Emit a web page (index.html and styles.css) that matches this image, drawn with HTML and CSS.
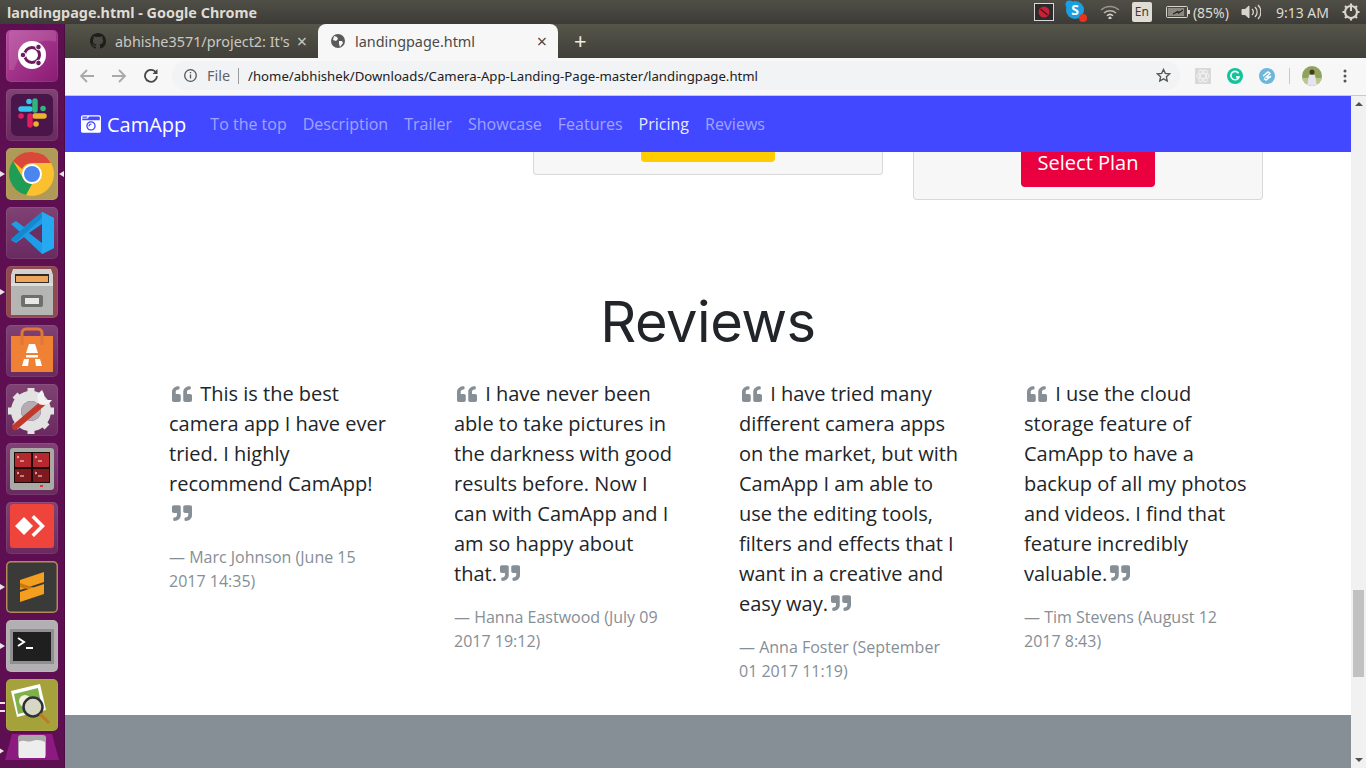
FILE: index.html
```html
<!DOCTYPE html>
<html lang="en">
<head>
  <meta charset="UTF-8" />
  <title>landingpage.html - Google Chrome</title>
  <link rel="stylesheet" href="styles.css">
</head>
<body>

  <svg class="defs" width="0" height="0">
    <symbol id="quote-left" viewBox="0 0 512 512" preserveAspectRatio="none"><path d="M464 256h-80v-64c0-35.300 28.700-64 64-64h8c13.300 0 24-10.700 24-24V56c0-13.300-10.700-24-24-24h-8c-88.400 0-160 71.600-160 160v240c0 26.500 21.500 48 48 48h128c26.500 0 48-21.500 48-48V304c0-26.500-21.500-48-48-48zm-288 0H96v-64c0-35.300 28.700-64 64-64h8c13.300 0 24-10.700 24-24V56c0-13.300-10.700-24-24-24h-8C71.600 32 0 103.600 0 192v240c0 26.500 21.500 48 48 48h128c26.500 0 48-21.500 48-48V304c0-26.500-21.500-48-48-48z"/></symbol>
    <symbol id="quote-right" viewBox="0 0 512 512" preserveAspectRatio="none"><path d="M464 32H336c-26.500 0-48 21.500-48 48v128c0 26.500 21.500 48 48 48h80v64c0 35.300-28.700 64-64 64h-8c-13.300 0-24 10.700-24 24v48c0 13.300 10.700 24 24 24h8c88.400 0 160-71.600 160-160V80c0-26.500-21.500-48-48-48zm-288 0H48C21.500 32 0 53.500 0 80v128c0 26.500 21.500 48 48 48h80v64c0 35.300-28.700 64-64 64h-8c-13.300 0-24 10.700-24 24v48c0 13.300 10.700 24 24 24h8c88.400 0 160-71.600 160-160V80c0-26.500-21.500-48-48-48z"/></symbol>
  </svg>

  <div class="topbar">
    <span class="window-title">landingpage.html - Google Chrome</span>
    <div class="tray">
      <svg class="tray-stop" width="20" height="18" viewBox="0 0 20 18"><rect x=".5" y=".5" width="19" height="17" fill="#2b2b2b" stroke="#d8d8d8"/><circle cx="10" cy="9" r="5.500" fill="#c8213a"/><path d="M6.500 6l7 6" stroke="#5a1018" stroke-width="1.500"/></svg>
      <svg class="tray-skype" width="23" height="24" viewBox="0 0 23 24"><circle cx="10" cy="10" r="9" fill="#1a9fe0"/><circle cx="4.500" cy="4.500" r="4" fill="#1a9fe0"/><text x="10" y="15" text-anchor="middle" class="skype-s">S</text><circle cx="18" cy="18" r="4" fill="#e8321f"/></svg>
      <svg class="tray-wifi" width="20" height="14" viewBox="0 0 20 14" fill="none" stroke="#d8d6cc" stroke-width="1.500"><path d="M1 5a13 13 0 0 1 18 0" opacity=".55"/><path d="M4 8a9 9 0 0 1 12 0" opacity=".8"/><path d="M7 10.700a4.500 4.500 0 0 1 6 0"/><circle cx="10" cy="13" r=".8" fill="#d8d6cc"/></svg>
      <span class="tray-lang">En</span>
      <svg class="tray-battery" width="24" height="12" viewBox="0 0 24 12"><rect x=".5" y=".5" width="21" height="11" rx="1" fill="#4a4940" stroke="#d8d6cc"/><rect x="2" y="2" width="16" height="8" fill="#8b8a80"/><rect x="22" y="4" width="2" height="4" fill="#d8d6cc"/><path d="M7 8l5-2 .5 1.500L17 4l-4.500 2.500L12 5z" fill="#2b2a25" stroke="#2b2a25"/></svg>
      <span class="tray-text tray-percent">(85%)</span>
      <svg class="tray-volume" width="20" height="16" viewBox="0 0 20 16" fill="none" stroke="#d8d6cc"><path d="M1 5.500h3L8 2v12l-4-3.500H1z" fill="#d8d6cc"/><path d="M11 5a4 4 0 0 1 0 6" stroke-width="1.300"/><path d="M14 3a7 7 0 0 1 0 10" stroke-width="1.300"/><path d="M17 1a10 10 0 0 1 0 14" stroke-width="1.300"/></svg>
      <span class="tray-text tray-clock">9:13 AM</span>
      <svg class="tray-gear" width="18" height="18" viewBox="0 0 18 18" fill="none" stroke="#d8d6cc"><circle cx="9" cy="9" r="6" stroke-width="2.200"/><path d="M9 1v7" stroke-width="2"/><path d="M9 .5v2.500M9 15v2.500M.5 9H3M15 9h2.500M3 3l1.800 1.800M13.200 13.200L15 15M3 15l1.800-1.800M13.200 4.800L15 3" stroke-width="2.200"/></svg>
    </div>
  </div>

  <div class="desktop">
    <div class="launcher">
      <div class="tile tile-ubuntu">
        <svg width="52" height="52" viewBox="0 0 52 52"><path d="M8 40C16 14 36 8 50 12v-8a3 3 0 0 0-3-3H6a3 3 0 0 0-3 3v36z" fill="#fff" opacity=".12"/><circle cx="26" cy="25" r="14" fill="#fff"/><circle cx="26" cy="25" r="7.500" fill="none" stroke="#6e1a5e" stroke-width="3"/><circle cx="32.500" cy="17" r="2.800" fill="#6e1a5e" stroke="#fff"/><circle cx="17" cy="25" r="2.800" fill="#6e1a5e" stroke="#fff"/><circle cx="32.500" cy="33" r="2.800" fill="#6e1a5e" stroke="#fff"/></svg>
      </div>
      <div class="tile tile-slack">
        <svg width="52" height="52" viewBox="0 0 52 52"><rect x="5" y="5" width="42" height="42" rx="6" fill="#4a154b"/><g stroke-width="5.500" stroke-linecap="round" fill="none"><path d="M15 20h9" stroke="#36c5f0"/><path d="M29 12v9" stroke="#2eb67d"/><path d="M29 27h9" stroke="#ecb22e"/><path d="M24 27v9" stroke="#e01e5a"/><path d="M37 19.500h.1" stroke="#2eb67d"/><path d="M30 35h.1" stroke="#ecb22e"/><path d="M15 27h.1" stroke="#e01e5a"/><path d="M23 12.500h.1" stroke="#36c5f0"/></g></svg>
      </div>
      <div class="tile tile-chrome pip-both">
        <svg width="52" height="52" viewBox="0 0 52 52"><circle cx="26" cy="26" r="22" fill="#fbc02d"/><path d="M26 4a22 22 0 0 1 19 11H26a11 11 0 0 0-10 6L7 13a22 22 0 0 1 19-9z" fill="#d9483b"/><path d="M7 13l10 17a10 10 0 0 0 9 6l-6 11A22 22 0 0 1 7 13z" fill="#1f9d55"/><circle cx="26" cy="26" r="10" fill="#fff"/><circle cx="26" cy="26" r="8" fill="#4a85f0"/></svg>
      </div>
      <div class="tile tile-plain">
        <svg width="52" height="52" viewBox="0 0 52 52"><path d="M36 5l12 6v30l-12 6-18-17-8 6-5-3 9-8-9-8 5-3 8 6z" fill="#1f9ce8"/><path d="M36 5v42l12-6V11z" fill="#27a9f2"/><path d="M36 17L23 26l13 10z" fill="#6a2f62"/><path d="M5 32l5 3 26-24v-6z" fill="#1688cf"/></svg>
      </div>
      <div class="tile tile-files pip-left">
        <svg width="52" height="52" viewBox="0 0 52 52"><path d="M7 3h38l2 6v40H5V9z" fill="#d2d2d0"/><rect x="9" y="8" width="34" height="10" fill="#2e2b28"/><rect x="10" y="10" width="32" height="6" fill="#eda65a"/><rect x="5" y="17" width="42" height="32" fill="#b5b5b3"/><rect x="5" y="17" width="42" height="3" fill="#dcdcda"/><rect x="15" y="29" width="22" height="12" rx="2" fill="#6e6e6c"/><rect x="19" y="32" width="14" height="6" fill="#e8e8e6"/></svg>
      </div>
      <div class="tile tile-plain">
        <svg width="52" height="52" viewBox="0 0 52 52"><path d="M5 11h42v36H5z" fill="#ef8135"/><path d="M16 20V8a4 4 0 0 1 4-4h12a4 4 0 0 1 4 4v12" fill="none" stroke="#e0773a" stroke-width="3"/><path d="M23 19h6l3 9h-12zM20 30h12v2.500H20zM18 34h5l-1 7h-6zM29 34h5l2 7h-6z" fill="#fff"/></svg>
      </div>
      <div class="tile tile-plain">
        <svg width="52" height="52" viewBox="0 0 52 52"><circle cx="25" cy="27" r="15" fill="none" stroke="#e2e2e2" stroke-width="10"/><circle cx="25" cy="27" r="10" fill="#b5abb2"/><path d="M25 4v7M25 43v7M2 27h7M41 27h7M9 11l5 5M36 38l5 5M9 43l5-5" stroke="#e2e2e2" stroke-width="7"/><path d="M9 43l27-23" stroke="#c0392b" stroke-width="6" stroke-linecap="round"/><path d="M36 6a10 10 0 0 0-3 14 10 10 0 0 0 13-4l-7 0-1-6z" fill="#f2f2f2"/></svg>
      </div>
      <div class="tile tile-plain">
        <svg width="52" height="52" viewBox="0 0 52 52"><rect x="4" y="5" width="44" height="42" rx="3" fill="#a9a9a5"/><rect x="8" y="9" width="36" height="31" fill="#1c0a0a"/><rect x="9" y="10" width="16" height="14" fill="#b5282e"/><rect x="27" y="10" width="16" height="14" fill="#b5282e"/><rect x="9" y="26" width="16" height="13" fill="#7e1a1e"/><rect x="27" y="26" width="16" height="13" fill="#7e1a1e"/><path d="M11 13l2 1-2 1M11 29l2 1-2 1M29 13l2 1-2 1M29 29l2 1-2 1" fill="none" stroke="#eee" stroke-width=".8"/><path d="M14 18h4M14 33h4M32 18h4M32 33h4" stroke="#eee" stroke-width="1"/><rect x="34" y="42" width="3" height="2" fill="#d33"/></svg>
      </div>
      <div class="tile tile-plain">
        <svg width="52" height="52" viewBox="0 0 52 52"><rect x="4" y="2" width="44" height="44" rx="3" fill="#ef443b"/><path d="M18 15l9 9-9 9-9-9z" fill="#fff"/><path d="M28 13l11 11-11 11-2.500-2.500L34 24l-8.500-8.500z" fill="#fff"/></svg>
      </div>
      <div class="tile tile-sublime pip-left">
        <svg width="52" height="52" viewBox="0 0 52 52"><path d="M14 19l24-8v10l-24 8z" fill="#f59f20"/><path d="M14 22l24 8v3L14 26z" fill="#c9790f"/><path d="M14 31l24-8v10l-24 8z" fill="#f59f20"/></svg>
      </div>
      <div class="tile tile-terminal pip-left">
        <svg width="52" height="52" viewBox="0 0 52 52"><rect x="4" y="9" width="44" height="35" fill="#8f8f8f"/><rect x="7" y="12" width="38" height="29" fill="#1f1f1f"/><path d="M12 18l6 4-6 4" fill="none" stroke="#fff" stroke-width="2"/><rect x="20" y="27" width="7" height="2" fill="#fff"/></svg>
      </div>
      <div class="tile tile-viewer pip-double">
        <svg width="52" height="52" viewBox="0 0 52 52"><path d="M5 12L34 5l6 26-29 7z" fill="#fff"/><path d="M8 15l24-6 4 20-24 6z" fill="#7fb04a"/><circle cx="19" cy="22" r="6" fill="#f4f1d8"/><circle cx="27" cy="28" r="9.500" fill="#d6d8c4" stroke="#2c3338" stroke-width="2.500"/><path d="M34 35l9 9" stroke="#c07a25" stroke-width="3"/></svg>
      </div>
      <div class="tile-trash pip-left">
        <svg width="54" height="35" viewBox="0 0 54 35"><path d="M7 1h40l7 26H0z" fill="#8c1a80"/><rect x="13" y="2" width="28" height="23" rx="3" fill="#a8a8a8"/><path d="M14 9c5-3 8 1 13-1s9-1 13 1v16H14z" fill="#ededed"/></svg>
      </div>
    </div>

    <div class="browser">
      <div class="tabstrip">
        <div class="tab">
          <svg width="16" height="16" viewBox="0 0 16 16" fill="#1e1e1c"><path d="M8 0C3.580 0 0 3.580 0 8c0 3.540 2.290 6.530 5.470 7.590.4.070.55-.17.55-.38 0-.19-.01-.82-.01-1.490-2.010.37-2.530-.49-2.690-.94-.09-.23-.48-.94-.82-1.130-.28-.15-.68-.52-.01-.53.63-.01 1.080.58 1.230.82.720 1.210 1.870.87 2.330.66.070-.52.280-.87.510-1.070-1.780-.2-3.640-.89-3.640-3.950 0-.87.310-1.590.820-2.150-.08-.2-.36-1.020.08-2.120 0 0 .67-.21 2.200.82a7.420 7.420 0 0 1 4 0c1.530-1.040 2.200-.82 2.200-.82.440 1.100.16 1.920.08 2.120.51.560.82 1.270.82 2.150 0 3.070-1.870 3.750-3.650 3.950.29.250.54.730.54 1.480 0 1.070-.01 1.930-.01 2.200 0 .21.150.46.550.38A8.010 8.010 0 0 0 16 8c0-4.420-3.580-8-8-8z"/></svg>
          <span class="tab-title">abhishe3571/project2: It's</span>
          <span class="tab-close">×</span>
        </div>
        <div class="tab tab-active">
          <svg width="14" height="14" viewBox="0 0 14 14"><circle cx="7" cy="7" r="7" fill="#5a5a5a"/><path d="M3 2l3 1 1 2-2 2-3-1zM8 7l3 0 1 2-3 4-1-3z" fill="#f7f7f7"/></svg>
          <span class="tab-title">landingpage.html</span>
          <span class="tab-close">×</span>
        </div>
        <span class="tab-new">+</span>
      </div>

      <div class="toolbar">
        <svg class="tool-back" width="14" height="14" viewBox="0 0 14 14" fill="none" stroke="#a9a9a9" stroke-width="1.800"><path d="M14 7H1.500M7 1L1 7l6 6"/></svg>
        <svg class="tool-forward" width="14" height="14" viewBox="0 0 14 14" fill="none" stroke="#a9a9a9" stroke-width="1.800"><path d="M0 7h12.500M7 1l6 6-6 6"/></svg>
        <svg class="tool-reload" width="14" height="14" viewBox="0 0 14 14" fill="none" stroke="#484848" stroke-width="1.800"><path d="M12 3.500A6 6 0 1 0 13 7"/><path d="M13.500 0v5h-5z" fill="#484848" stroke="none"/></svg>
        <div class="omnibox">
          <svg width="13" height="13" viewBox="0 0 13 13" fill="none" stroke="#555" stroke-width="1.300"><circle cx="6.500" cy="6.500" r="5.800"/><path d="M6.500 5.500v4M6.500 3v1.300"/></svg>
          <span class="omni-file">File</span>
          <span class="omni-sep"></span>
          <span class="omni-url">/home/abhishek/Downloads/Camera-App-Landing-Page-master/landingpage.html</span>
          <svg class="omni-star" width="15" height="15" viewBox="0 0 15 15" fill="none" stroke="#555" stroke-width="1.400"><path d="M7.500 1.500l1.800 3.900 4.200.5-3.100 2.900.8 4.200-3.700-2.100-3.700 2.100.8-4.200L1.500 5.900l4.200-.5z"/></svg>
        </div>
        <svg class="ext ext-react" width="16" height="16" viewBox="0 0 16 16" fill="none" stroke="#f2f2f2"><rect width="16" height="16" fill="#d9d9d9" stroke="none"/><ellipse cx="8" cy="8" rx="6.500" ry="2.600"/><ellipse cx="8" cy="8" rx="6.500" ry="2.600" transform="rotate(60 8 8)"/><ellipse cx="8" cy="8" rx="6.500" ry="2.600" transform="rotate(120 8 8)"/></svg>
        <svg class="ext ext-grammarly" width="16" height="16" viewBox="0 0 16 16"><circle cx="8" cy="8" r="8" fill="#15c39a"/><path d="M11.500 5.200A4.200 4.200 0 1 0 12 9H9" fill="none" stroke="#fff" stroke-width="1.600"/></svg>
        <svg class="ext ext-other" width="16" height="16" viewBox="0 0 16 16"><circle cx="8" cy="8" r="8" fill="#6db6dc"/><path d="M4 8l5-4 2 1.500-4 3.500h5M12 8l-5 4-2-1.500" fill="none" stroke="#fff" stroke-width="1.400"/></svg>
        <span class="tool-sep"></span>
        <svg class="avatar" width="20" height="20" viewBox="0 0 20 20"><defs><clipPath id="avatar-clip"><circle cx="10" cy="10" r="10"/></clipPath></defs><g clip-path="url(#avatar-clip)"><rect width="20" height="20" fill="#8fa35c"/><rect y="12" width="20" height="8" fill="#b9c78e"/><path d="M5 20l2-11h6l2 11z" fill="#e4e4ee"/><circle cx="10" cy="6" r="2.500" fill="#4a3527"/></g></svg>
        <svg class="tool-menu" width="4" height="14" viewBox="0 0 4 14" fill="#555"><circle cx="2" cy="2" r="1.500"/><circle cx="2" cy="7" r="1.500"/><circle cx="2" cy="12" r="1.500"/></svg>
      </div>

      <div class="viewport">
        <div class="page">
          <nav class="navbar">
            <a class="brand">
              <svg width="20" height="20" viewBox="0 0 512 512" fill="#fff"><path d="M48 32C21.500 32 0 53.500 0 80v352c0 26.500 21.500 48 48 48h416c26.500 0 48-21.500 48-48V80c0-26.500-21.500-48-48-48H48zm0 32h106c3.300 0 6 2.700 6 6v20c0 3.300-2.700 6-6 6H38c-3.300 0-6-2.700-6-6V80c0-8.800 7.200-16 16-16zm426 96H38c-3.300 0-6-2.700-6-6v-36c0-3.300 2.700-6 6-6h138l30.200-45.300c1.100-1.700 3-2.700 5-2.700H464c8.800 0 16 7.200 16 16v74c0 3.300-2.700 6-6 6zM256 424c-66.200 0-120-53.800-120-120s53.800-120 120-120 120 53.800 120 120-53.800 120-120 120zm0-208c-48.500 0-88 39.500-88 88s39.500 88 88 88 88-39.500 88-88-39.500-88-88-88zm-48 104c-8.800 0-16-7.200-16-16 0-35.300 28.700-64 64-64 8.800 0 16 7.200 16 16s-7.200 16-16 16c-17.600 0-32 14.400-32 32 0 8.800-7.200 16-16 16z"/></svg>
              CamApp
            </a>
            <a class="nav-link">To the top</a>
            <a class="nav-link">Description</a>
            <a class="nav-link">Trailer</a>
            <a class="nav-link">Showcase</a>
            <a class="nav-link">Features</a>
            <a class="nav-link nav-active">Pricing</a>
            <a class="nav-link">Reviews</a>
          </nav>

          <section class="pricing">
            <div class="plan-col"></div>
            <div class="plan-col">
              <div class="plan plan-mid"><div class="plan-btn btn-yellow"></div></div>
            </div>
            <div class="plan-col">
              <div class="plan plan-high"><div class="plan-btn btn-red">Select Plan</div></div>
            </div>
          </section>

          <section class="reviews">
            <h1>Reviews</h1>
            <div class="review-row">
              <div class="review">
                <p><svg class="q q-left"><use href="#quote-left"/></svg> This is the best camera app I have ever tried. I highly recommend CamApp!<svg class="q q-right"><use href="#quote-right"/></svg></p>
                <footer>— Marc Johnson (June 15 2017 14:35)</footer>
              </div>
              <div class="review">
                <p><svg class="q q-left"><use href="#quote-left"/></svg> I have never been able to take pictures in the darkness with good results before. Now I can with CamApp and I am so happy about that.<svg class="q q-right"><use href="#quote-right"/></svg></p>
                <footer>— Hanna Eastwood (July 09 2017 19:12)</footer>
              </div>
              <div class="review">
                <p><svg class="q q-left"><use href="#quote-left"/></svg> I have tried many different camera apps on the market, but with CamApp I am able to use the editing tools, filters and effects that I want in a creative and easy way.<svg class="q q-right"><use href="#quote-right"/></svg></p>
                <footer>— Anna Foster (September 01 2017 11:19)</footer>
              </div>
              <div class="review">
                <p><svg class="q q-left"><use href="#quote-left"/></svg> I use the cloud storage feature of CamApp to have a backup of all my photos and videos. I find that feature incredibly valuable.<svg class="q q-right"><use href="#quote-right"/></svg></p>
                <footer>— Tim Stevens (August 12 2017 8:43)</footer>
              </div>
            </div>
          </section>

          <div class="page-footer"></div>
        </div>

        <div class="scrollbar">
          <span class="arrow-up"></span>
          <div class="scroll-track"><div class="scroll-thumb"></div></div>
          <span class="arrow-down"></span>
        </div>
      </div>
    </div>
  </div>

</body>
</html>
```

FILE: styles.css
```css
* {
  box-sizing: border-box;
}

html,
body {
  height: 100%;
}

body {
  margin: 0;
  width: 1366px;
  height: 768px;
  overflow: hidden;
  display: flex;
  flex-direction: column;
  font-family: 'Open Sans', sans-serif;
  background: #fff;
}

.defs {
  position: absolute;
}

/* ubuntu top panel */
.topbar {
  height: 24px;
  flex: none;
  display: flex;
  align-items: center;
  justify-content: space-between;
  background: linear-gradient(to bottom, #4f4e46, #3c3b37);
  color: #dfdbd2;
}

.window-title {
  padding-left: 7px;
  font-family: 'Noto Sans', sans-serif;
  font-size: 14.4px;
  font-weight: 700;
}

.tray {
  display: flex;
  align-items: center;
  padding-right: 6px;
}

.tray-stop { margin-right: 11px; }
.tray-skype { margin-right: 12px; }
.tray-wifi { margin-right: 12px; }

.tray-lang {
  width: 20px;
  height: 20px;
  margin-right: 14px;
  background: #e0ddd5;
  color: #3c3b37;
  border-radius: 2px;
  font-size: 12px;
  line-height: 20px;
  text-align: center;
  font-family: 'Noto Sans', sans-serif;
}

.tray-battery { margin-right: 3px; }

.tray-text {
  font-family: 'Noto Sans', sans-serif;
  font-size: 14px;
  color: #dfdbd2;
}

.tray-percent { margin-right: 12px; }
.tray-volume { margin-right: 15px; }
.tray-clock { margin-right: 13px; }

.skype-s {
  font-family: 'Noto Sans', sans-serif;
  font-size: 14px;
  font-weight: 700;
  fill: #fff;
}

.desktop {
  flex: 1;
  display: flex;
  min-height: 0;
}

/* launcher */
.launcher {
  width: 65px;
  flex: none;
  display: flex;
  flex-direction: column;
  gap: 7px;
  padding: 6px 0 0 6px;
  overflow: hidden;
  background: #5e0f52;
  border-right: 1px solid #4c0c42;
}

.tile {
  position: relative;
  width: 52px;
  height: 52px;
  flex: none;
  border-radius: 5px;
  background: linear-gradient(to bottom, #7f4273, #6a2a60);
  box-shadow: inset 0 0 0 1px rgba(255, 255, 255, 0.08);
}

.tile svg,
.tile-trash svg {
  display: block;
}

.tile-ubuntu { background: linear-gradient(135deg, #b84a9e, #8a1a73); }
.tile-chrome { background: #b09a58; }
.tile-files { background: #8e4a50; }
.tile-sublime { background: #3a3a38; box-shadow: inset 0 0 0 1.5px #b58a5a; }
.tile-terminal { background: #b3afb3; }
.tile-viewer { background: #a5a23c; }

.tile-trash {
  position: relative;
  width: 54px;
  height: 35px;
  flex: none;
  margin: -5px 0 0 -1px;
}

.pip-left::before,
.pip-both::before,
.pip-double::before {
  content: "";
  position: absolute;
  left: -6px;
  top: 50%;
  margin-top: -3px;
  border-left: 5px solid #e8e4e8;
  border-top: 3px solid transparent;
  border-bottom: 3px solid transparent;
}

.pip-both::after {
  content: "";
  position: absolute;
  right: -6px;
  top: 50%;
  margin-top: -3px;
  border-right: 5px solid #e8e4e8;
  border-top: 3px solid transparent;
  border-bottom: 3px solid transparent;
}

.pip-double::before {
  border: none;
  width: 5px;
  height: 6px;
  margin-top: -3px;
  border-top: 2px solid #e8e4e8;
  border-bottom: 2px solid #e8e4e8;
}

/* chrome */
.browser {
  flex: 1;
  min-width: 0;
  display: flex;
  flex-direction: column;
}

.tabstrip {
  height: 34px;
  flex: none;
  display: flex;
  align-items: stretch;
  padding-left: 9px;
  background: linear-gradient(to bottom, #56554a, #403f39);
  font-family: 'Noto Sans', sans-serif;
  font-size: 14.4px;
}

.tab {
  width: 244px;
  display: flex;
  align-items: center;
  gap: 9px;
  padding: 0 11px 0 16px;
  color: #c9c8c2;
}

.tab svg {
  flex: none;
}

.tab-active {
  width: 240px;
  gap: 10px;
  padding-left: 13px;
  background: #f7f7f7;
  color: #4a4a4a;
  border-radius: 8px 8px 0 0;
}

.tab-title {
  flex: 1;
  min-width: 0;
  white-space: nowrap;
}

.tab-close {
  font-size: 18px;
  line-height: 1;
}

.tab-new {
  margin-left: 16px;
  color: #ececec;
  font-size: 22px;
  line-height: 33px;
}

.toolbar {
  height: 38px;
  flex: none;
  display: flex;
  align-items: center;
  padding: 0 0 2px 15px;
  background: #f7f7f7;
  border-bottom: 1px solid #c9c9c9;
}

.tool-forward { margin-left: 18px; }
.tool-reload { margin-left: 18px; }

.omnibox {
  width: 1008px;
  height: 29px;
  margin-left: 14px;
  padding-left: 12px;
  display: flex;
  align-items: center;
  background: #f1f3f4;
  border-radius: 15px;
  font-family: 'Noto Sans', sans-serif;
  font-size: 14.4px;
}

.omni-file {
  margin-left: 10px;
  color: #5f6368;
}

.omni-sep {
  width: 1px;
  height: 16px;
  margin: 0 9px 0 8px;
  background: #9a9a9a;
}

.omni-url {
  color: #202124;
  font-size: 13.2px;
  white-space: nowrap;
}

.omni-star { margin-left: auto; margin-right: 9px; }

.ext-react { margin-left: 15px; }
.ext-grammarly { margin-left: 16px; }
.ext-other { margin-left: 16px; }

.tool-sep {
  width: 1px;
  height: 16px;
  margin-left: 14px;
  background: #c9c9c9;
}

.avatar { margin-left: 12px; }
.tool-menu { margin-left: 21px; }

.viewport {
  flex: 1;
  min-height: 0;
  display: flex;
}

/* the landing page */
.page {
  flex: 1;
  min-width: 0;
  overflow: hidden;
  display: flex;
  flex-direction: column;
  background: #fff;
  color: #212529;
}

.navbar {
  position: relative;
  z-index: 2;
  height: 56px;
  flex: none;
  display: flex;
  align-items: center;
  padding: 0 16px;
  background: #4248ff;
  font-size: 16px;
}

.brand {
  display: flex;
  align-items: center;
  gap: 6px;
  margin-right: 16px;
  color: #fff;
  font-size: 20px;
}

.nav-link {
  padding: 0 8px;
  color: rgba(255, 255, 255, 0.5);
}

.nav-active {
  color: rgba(255, 255, 255, 0.9);
}

.pricing {
  flex: none;
  height: 48px;
  display: grid;
  grid-template-columns: repeat(3, 380px);
  justify-content: center;
  align-items: start;
}

.plan-col {
  padding: 0 15px;
}

.plan {
  display: flex;
  justify-content: center;
  align-items: flex-end;
  background: #f7f7f7;
  border: 1px solid rgba(0, 0, 0, 0.125);
  border-top: none;
  border-radius: 0 0 4px 4px;
}

.plan-mid {
  height: 23px;
  padding-bottom: 12px;
}

.plan-high {
  height: 48px;
  padding-bottom: 12px;
}

/* only the lower part of each button shows under the navbar */
.plan-btn {
  width: 134px;
  flex: none;
  height: 35px;
  border-radius: 0 0 4px 4px;
  color: #fff;
  font-size: 20px;
  line-height: 22px;
  text-align: center;
}

.plan-mid .plan-btn {
  height: 10px;
}

.btn-yellow { background: #ffcc00; }
.btn-red { background: #ea003e; }

.reviews {
  flex: 1;
  padding-top: 89px;
  display: flex;
  flex-direction: column;
  align-items: center;
}

.reviews h1 {
  margin: 0 0 23px;
  font-family: Inter, sans-serif;
  font-size: 56px;
  font-weight: 400;
  letter-spacing: -0.5px;
  line-height: 1.2;
  color: #212529;
}

.review-row {
  width: 1140px;
  display: grid;
  grid-template-columns: repeat(4, 285px);
}

.review {
  padding: 0 31px;
}

.review p {
  margin: 0 0 16px;
  font-size: 20px;
  line-height: 30px;
}

.review footer {
  font-size: 16px;
  line-height: 24px;
  color: #868e96;
}

.q {
  width: 20px;
  height: 18px;
  fill: #868e96;
}

.q-left {
  margin: 0 3px 0 3px;
  vertical-align: -2px;
}

.q-right {
  margin-left: 3px;
  vertical-align: -1px;
}

.page-footer {
  height: 53px;
  flex: none;
  background: #868e96;
}

/* scrollbar */
.scrollbar {
  width: 15px;
  flex: none;
  display: flex;
  flex-direction: column;
  align-items: center;
  background: #f1f1f1;
}

.arrow-up {
  margin-top: 6px;
  border-bottom: 4px solid #505050;
  border-left: 4px solid transparent;
  border-right: 4px solid transparent;
}

.arrow-down {
  margin-bottom: 6px;
  border-top: 4px solid #505050;
  border-left: 4px solid transparent;
  border-right: 4px solid transparent;
}

.scroll-track {
  flex: 1;
  width: 100%;
  padding: 484px 2px 0;
}

.scroll-thumb {
  height: 87px;
  background: #c1c1c1;
}
```
